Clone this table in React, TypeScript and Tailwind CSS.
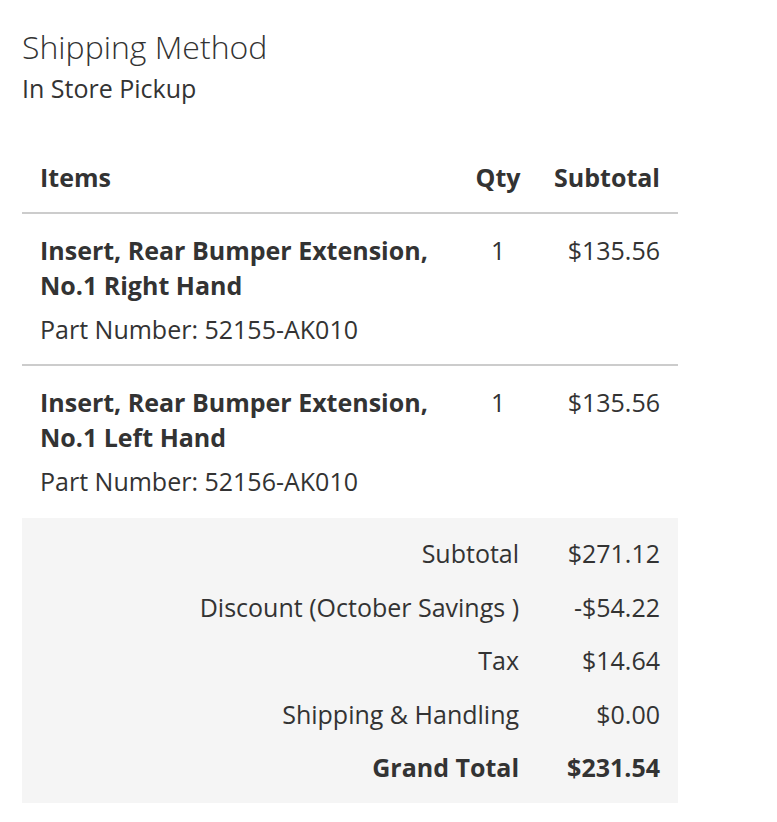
import React from "react"

const items = [
  { name: "Insert, Rear Bumper Extension,", name2: "No.1 Right Hand", part: "52155-AK010", qty: 1, price: "$135.56" },
  { name: "Insert, Rear Bumper Extension,", name2: "No.1 Left Hand", part: "52156-AK010", qty: 1, price: "$135.56" },
]

const totals = [
  { label: "Subtotal", value: "$271.12" },
  { label: "Discount (October Savings )", value: "-$54.22" },
  { label: "Tax", value: "$14.64" },
  { label: "Shipping & Handling", value: "$0.00" },
]

export default function App() {
  return (
    <div className="min-h-screen bg-white text-[#333] font-['Open_Sans',sans-serif] pl-[22px] pt-[26px]">
      <h2 className="text-[32px] font-light leading-[42px]">Shipping Method</h2>
      <p className="text-[25px] leading-[36px] mt-[2px]">In Store Pickup</p>

      <table className="w-[656px] mt-[50px] border-collapse text-[25px]">
        <thead>
          <tr className="border-b-2 border-[#cccccc]">
            <th className="text-left font-bold px-[18px] pt-[4px] pb-[17px] leading-[35px]">Items</th>
            <th className="text-center font-bold pl-[21px] pr-[15px] pt-[4px] pb-[17px] leading-[35px] w-[82px]">Qty</th>
            <th className="text-right font-bold px-[18px] pt-[4px] pb-[17px] leading-[35px] w-[140px]">Subtotal</th>
          </tr>
        </thead>
        <tbody>
          {items.map((it, i) => (
            <tr key={i} className={i === 0 ? "border-b-2 border-[#cccccc]" : ""}>
              <td className={`px-[18px] pt-[19px] align-top ${i === 0 ? "pb-[17px]" : "pb-[19px]"}`}>
                <div className="font-bold leading-[35px]">
                  {it.name}
                  <br />
                  {it.name2}
                </div>
                <div className="leading-[35px] mt-[9px]">Part Number: {it.part}</div>
              </td>
              <td className="pl-[21px] pr-[15px] pt-[19px] align-top text-center leading-[35px]">{it.qty}</td>
              <td className="px-[18px] pt-[19px] align-top text-right leading-[35px]">{it.price}</td>
            </tr>
          ))}
        </tbody>
        <tfoot className="bg-[#f5f5f5]">
          {totals.map((t, i) => (
            <tr key={i}>
              <td colSpan={2} className="text-right pr-[17px] leading-[35.5px] pt-[18px]">{t.label}</td>
              <td className="text-right pr-[18px] leading-[35.5px] pt-[18px]">{t.value}</td>
            </tr>
          ))}
          <tr>
            <td colSpan={2} className="text-right pr-[17px] leading-[35.5px] pt-[18px] pb-[17px] font-bold">Grand Total</td>
            <td className="text-right pr-[18px] leading-[35.5px] pt-[18px] pb-[17px] font-bold">$231.54</td>
          </tr>
        </tfoot>
      </table>
    </div>
  )
}
